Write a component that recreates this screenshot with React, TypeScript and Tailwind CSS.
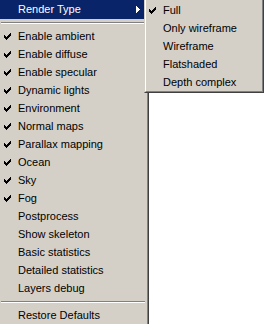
const mainItems: { label: string; checked: boolean }[] = [
  { label: 'Enable ambient', checked: true },
  { label: 'Enable diffuse', checked: true },
  { label: 'Enable specular', checked: true },
  { label: 'Dynamic lights', checked: true },
  { label: 'Environment', checked: true },
  { label: 'Normal maps', checked: true },
  { label: 'Parallax mapping', checked: true },
  { label: 'Ocean', checked: true },
  { label: 'Sky', checked: true },
  { label: 'Fog', checked: true },
  { label: 'Postprocess', checked: false },
  { label: 'Show skeleton', checked: false },
  { label: 'Basic statistics', checked: false },
  { label: 'Detailed statistics', checked: false },
  { label: 'Layers debug', checked: false },
]

const renderTypes = ['Full', 'Only wireframe', 'Wireframe', 'Flatshaded', 'Depth complex']

function Check() {
  return (
    <svg width="7" height="7" viewBox="0 0 7 7" shapeRendering="crispEdges" className="shrink-0">
      <path
        fill="#000"
        d="M6 0h1v3h-1v1h-1v1h-1v1h-1v1h-1v-1h-1v-1h-1v-3h1v1h1v1h1v-1h1v-1h1v-1h1z"
      />
    </svg>
  )
}

function Separator() {
  return (
    <div className="h-[8px] pt-[3px] pl-[1px] pr-[2px]">
      <div className="h-px bg-[#808080]" />
      <div className="h-px bg-white" />
    </div>
  )
}

function Row({ label, checked }: { label: string; checked: boolean }) {
  return (
    <div className="h-[18px] flex items-center mr-[3px]">
      <div className="w-[18px] pl-[4px] flex items-center">{checked && <Check />}</div>
      <span className="leading-none">{label}</span>
    </div>
  )
}

export default function App() {
  return (
    <div
      className="relative w-[264px] h-[324px] bg-white overflow-hidden text-[11px] text-black"
      style={{ fontFamily: '"Liberation Sans", Arial, sans-serif' }}
    >
      {/* main menu */}
      <div className="w-[149px] h-full bg-[#d4d0c8] border-r border-[#404040]">
        <div className="h-full border-r border-[#808080]">
          <div className="h-[19px] flex items-center bg-[#0a246a] text-white mr-[3px]">
            <span className="pl-[18px] flex-1 leading-none">Render Type</span>
            <svg width="4" height="7" viewBox="0 0 4 7" shapeRendering="crispEdges" className="mr-[4px]">
              <path fill="#fff" d="M0 0h1v1h1v1h1v1h1v1h-1v1h-1v1h-1v1h-1z" />
            </svg>
          </div>
          <Separator />
          {mainItems.map((item) => (
            <Row key={item.label} label={item.label} checked={item.checked} />
          ))}
          <div className="h-[9px] pt-[4px] pl-[1px] pr-[2px]">
            <div className="h-px bg-[#808080]" />
            <div className="h-px bg-white" />
          </div>
          <Row label="Restore Defaults" checked={false} />
        </div>
      </div>

      {/* render type submenu */}
      <div className="absolute left-[144px] top-0 w-[120px] h-[93px] bg-[#d4d0c8] border-l border-b border-r border-l-[#d4d0c8] border-b-[#404040] border-r-[#404040]">
        <div className="h-full pt-px border-l border-b border-r border-l-white border-b-[#808080] border-r-[#808080]">
          {renderTypes.map((t, i) => (
            <div key={t} className="h-[18px] flex items-center">
              <div className="w-[17px] pl-[3px] flex items-center">{i === 0 && <Check />}</div>
              <span className="leading-none">{t}</span>
            </div>
          ))}
        </div>
      </div>
    </div>
  )
}
